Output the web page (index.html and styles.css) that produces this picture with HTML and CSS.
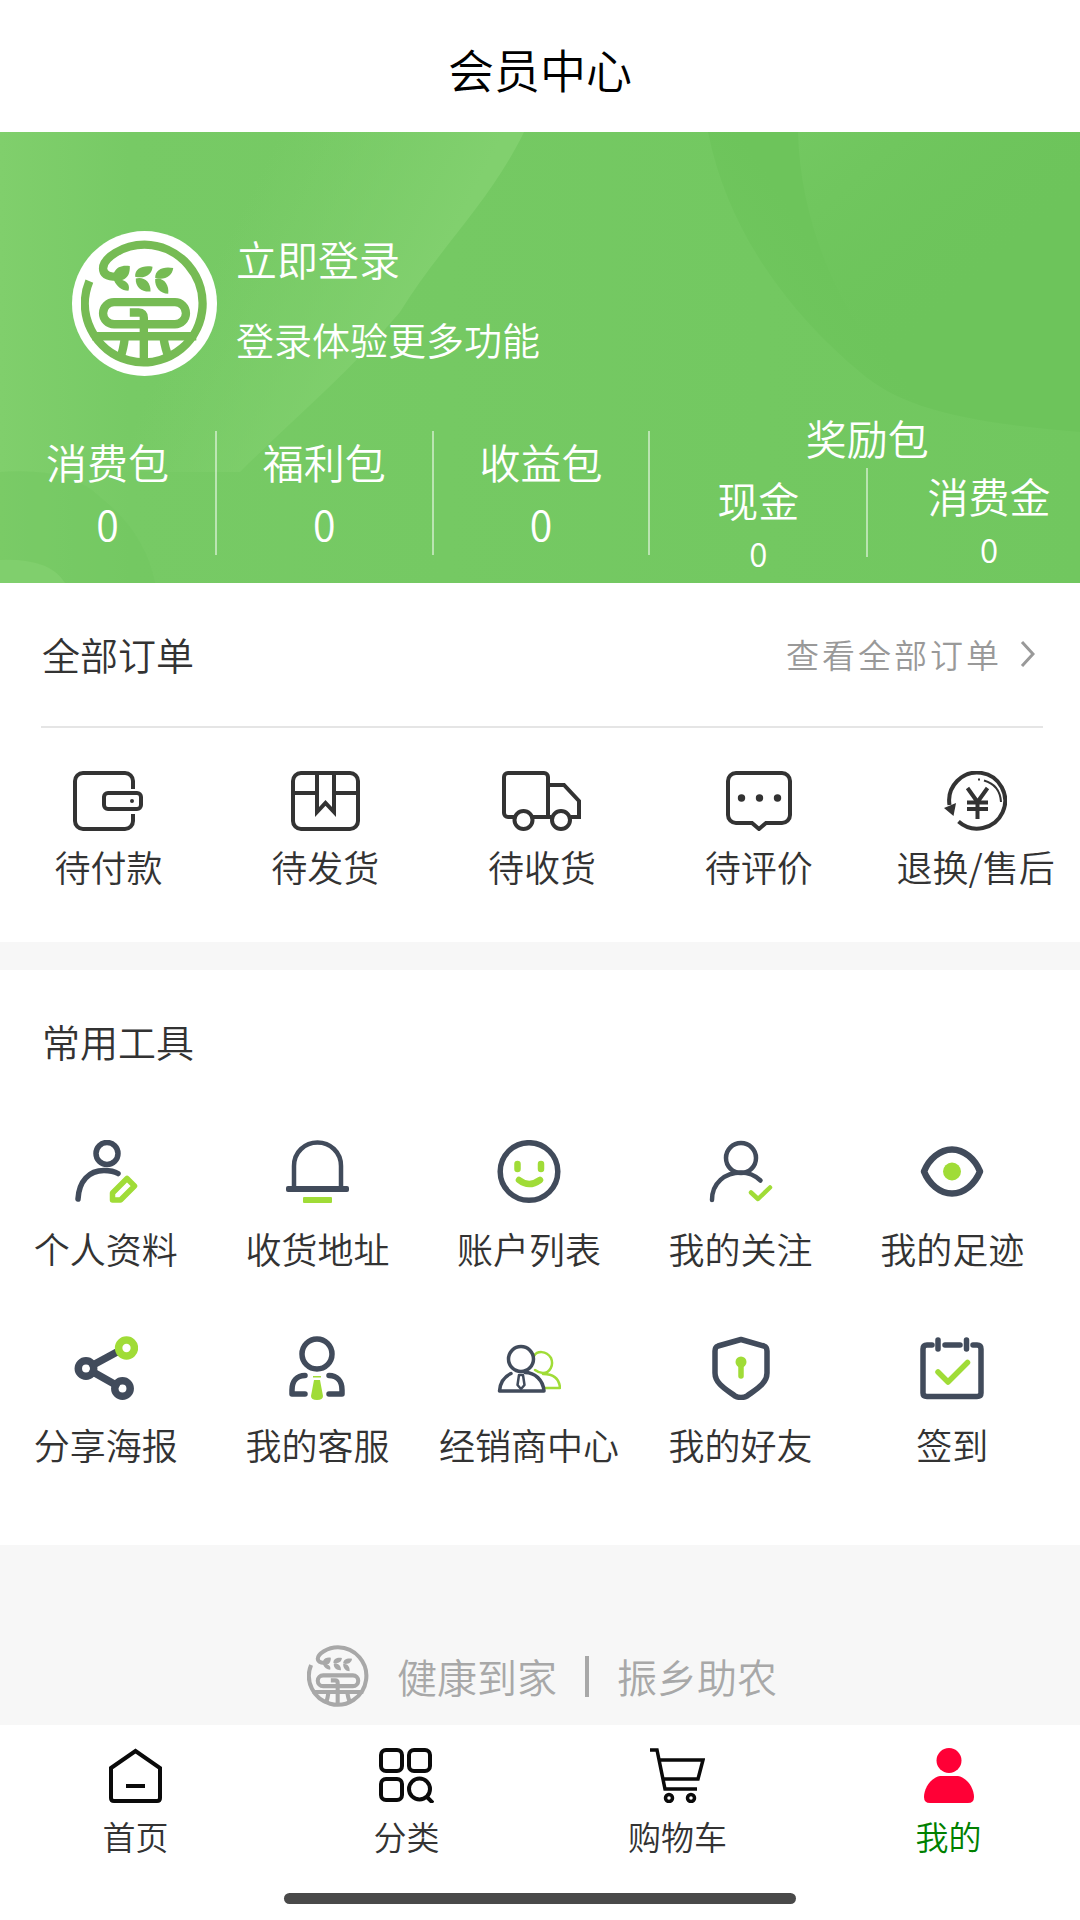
FILE: index.html
```html
<!DOCTYPE html>
<html lang="zh-CN">
<head>
<meta charset="utf-8">
<meta name="viewport" content="width=device-width, initial-scale=1">
<title>会员中心</title>
<link rel="stylesheet" href="styles.css">
</head>
<body>
<svg class="defs" width="0" height="0" aria-hidden="true">
  <symbol id="brand" viewBox="91 87 380 380">
    <g fill="none" stroke="currentColor" stroke-width="25">
      <path d="M116 210A176 176 0 1 0 281 101C215 101 157 142 157 172C157 190 172 197 200 197"/>
      <rect x="157" y="273" width="248" height="66" rx="33"/>
      <path d="M237 304H264Q279 304 279 320V455M125 375H436M222 380Q219 410 207 446M338 380Q342 410 356 446"/>
    </g>
    <g fill="currentColor">
      <path d="M190 184C198 166 218 161 237 165C238 185 232 202 214 207C232 212 238 226 233 239C212 238 198 226 190 208Z"/>
      <path d="M253 197C252 172 276 162 305 167C304 189 285 204 253 197ZM255 202C277 195 301 211 299 241C274 243 253 229 255 202Z"/>
      <path d="M313 201C312 176 337 165 367 171C364 195 343 208 313 201ZM313 204C337 197 356 219 352 248C328 248 311 229 313 204Z"/>
    </g>
  </symbol>
</svg>

<header class="topbar"><h1>会员中心</h1></header>

<main>
  <section class="hero">
    <svg class="hero-art" viewBox="0 0 1080 451" preserveAspectRatio="none" aria-hidden="true">
      <defs>
        <linearGradient id="edge" x1="0" x2="1" y1="0" y2="0"><stop offset="0" stop-color="#80cf6c"/><stop offset=".12" stop-color="#77ca65"/><stop offset="1" stop-color="#71c75f"/></linearGradient>
        <linearGradient id="beam" gradientUnits="userSpaceOnUse" x1="250" y1="60" x2="430" y2="150"><stop offset="0" stop-color="#81d06e" stop-opacity="0"/><stop offset="1" stop-color="#81d06e"/></linearGradient>
        <linearGradient id="sheen" gradientUnits="userSpaceOnUse" x1="800" y1="0" x2="960" y2="180"><stop offset="0" stop-color="#73c861"/><stop offset="1" stop-color="#6dc45b" stop-opacity="0"/></linearGradient>
        <linearGradient id="shade" gradientUnits="userSpaceOnUse" x1="700" y1="200" x2="820" y2="120"><stop offset="0" stop-color="#6dc45b" stop-opacity=".3"/><stop offset="1" stop-color="#6dc45b"/></linearGradient>
      </defs>
      <path fill="url(#edge)" d="M0 0H1080V451H0Z"/>
      <path fill="url(#beam)" d="M200 0H524C490 70 440 115 400 180C350 240 290 290 240 340H60Z"/>
      <path fill="url(#shade)" d="M708 0H1080V300C960 290 900 275 860 240C800 190 730 110 708 0Z"/>
      <path fill="url(#sheen)" d="M798 0H1080V260C1000 250 930 250 890 240C830 165 800 80 798 0Z"/>
      <path fill="#71c65f" d="M0 340Q70 335 100 365Q145 400 155 451H0Z" opacity=".4"/>
      <path fill="#80cf6d" d="M0 428Q50 426 65 451H0Z"/>
    </svg>
    <a class="profile" href="#">
      <span class="avatar"><svg width="127" height="127"><use href="#brand"/></svg></span>
      <span class="profile-text"><strong>立即登录</strong><span>登录体验更多功能</span></span>
    </a>
    <div class="stats">
      <a class="stat" href="#"><span>消费包</span><b>0</b></a>
      <a class="stat" href="#"><span>福利包</span><b>0</b></a>
      <a class="stat" href="#"><span>收益包</span><b>0</b></a>
      <div class="rewards">
        <h2>奖励包</h2>
        <div class="reward-row">
          <a class="reward cash" href="#"><span>现金</span><b>0</b></a>
          <i class="rule"></i>
          <a class="reward credit" href="#"><span>消费金</span><b>0</b></a>
        </div>
      </div>
    </div>
  </section>

  <section class="orders">
    <div class="orders-head">
      <h2>全部订单</h2>
      <a class="more" href="#">查看全部订单
        <svg width="15" height="26" viewBox="0 0 15 26"><path d="M2 1L13 13L2 25"/></svg>
      </a>
    </div>
    <nav class="order-grid" aria-label="订单">
      <a href="#"><svg width="70" height="60" viewBox="0 0 70 60"><path d="M60 18V10a8 8 0 0 0-8-8H10a8 8 0 0 0-8 8V50a8 8 0 0 0 8 8H52a8 8 0 0 0 8-8V43"/><rect x="31" y="22" width="37" height="16" rx="4"/><circle class="dot" cx="59" cy="30" r="2"/></svg><span>待付款</span></a>
      <a href="#"><svg width="69" height="60" viewBox="0 0 69 60"><rect x="2" y="2" width="65" height="56" rx="8"/><path d="M2 22H26M43 22H67M26 2V41L34.500 32L43 41V2"/></svg><span>待发货</span></a>
      <a href="#"><svg width="79" height="60" viewBox="0 0 79 60"><path d="M12 46H6a4 4 0 0 1-4-4V6a4 4 0 0 1 4-4H42a4 4 0 0 1 4 4V46M31 46H49M46 14H62L77 30V46H69"/><circle cx="21.500" cy="49" r="9"/><circle cx="59" cy="49" r="9"/></svg><span>待收货</span></a>
      <a href="#"><svg width="66" height="60" viewBox="0 0 66 60"><path d="M10 2H56a8 8 0 0 1 8 8V44a8 8 0 0 1-8 8H40L33 58L26 52H10a8 8 0 0 1-8-8V10a8 8 0 0 1 8-8Z"/><g class="dot"><circle cx="15.500" cy="27" r="3.700"/><circle cx="33.500" cy="27" r="3.700"/><circle cx="51.500" cy="27" r="3.700"/></g></svg><span>待评价</span></a>
      <a href="#"><svg width="63" height="60" viewBox="0 0 63 60"><path d="M5.500 34A28 28 0 1 1 14.500 50.500M23.500 17L33.500 31L43.500 17M33.500 31V48M23 31.500H44M23 38H44"/><path class="fine" d="M40 9.500Q56 14 57 31M34 8.500h2"/><path class="dot" d="M0 37L12 32L9.500 45Z"/></svg><span>退换/售后</span></a>
    </nav>
  </section>

  <section class="tools">
    <h2>常用工具</h2>
    <nav class="tool-grid" aria-label="常用工具">
      <a href="#"><svg viewBox="0 0 64 64"><circle cx="33" cy="13.500" r="11"/><path d="M4 59C5 41 15 30.500 30 30.500Q39 30.500 44 33.500"/><path class="lime" d="M38.500 53L53 38.500L60.500 46L46.500 60H38.500Z"/></svg><span>个人资料</span></a>
      <a href="#"><svg viewBox="0 0 64 64"><path class="mid" d="M9 48V26C9 12 20 2.500 32.500 2.500S56 12 56 26V48"/><path class="solid" d="M3 46H62q2 0 2 2v2q0 2-2 2H3q-2 0-2-2v-2q0-2 2-2Z"/><path class="solid-lime" d="M19 57H46q1 0 1 1v4q0 1-1 1H19q-1 0-1-1v-4q0-1 1-1Z"/></svg><span>收货地址</span></a>
      <a href="#"><svg viewBox="0 0 64 64"><circle cx="32" cy="31.500" r="28.800"/><path class="lime wide" d="M20.500 24V29M44 24V29M22 40Q32 48 43 40"/></svg><span>账户列表</span></a>
      <a href="#"><svg viewBox="0 0 64 64"><circle class="mid" cx="32" cy="18" r="15"/><path class="mid" d="M3 60C3 43 16 32.500 32 32.500Q43 32.500 51.500 40.500"/><path class="lime mid" d="M42 52.500L49 59L61 47.500"/></svg><span>我的关注</span></a>
      <a href="#"><svg viewBox="0 0 64 64"><path class="wide" d="M4 31.500C9 19 20 9.500 32 9.500S55 19 60 31.500C55 44 44 53.500 32 53.500S9 44 4 31.500Z"/><circle class="solid-lime" cx="32" cy="31.500" r="9"/></svg><span>我的足迹</span></a>
      <a href="#"><svg viewBox="0 0 64 64"><path class="ring" d="M19 29L43 16M19 36L42 49"/><circle class="ring" cx="12" cy="32.500" r="7.700"/><circle class="ring" cx="48.500" cy="52.500" r="7.700"/><circle class="ring lime" cx="52.500" cy="12" r="7.900"/></svg><span>分享海报</span></a>
      <a href="#"><svg viewBox="0 0 64 64"><circle cx="32" cy="18" r="15"/><path d="M20 39.500C12 39.500 7 45 7 54V58H20M44 39.500C52 39.500 57 45 57 54V58H44"/><path class="solid-lime" d="M29 44H35L38 60Q38 64 32 64T26 60ZM28 40H36V41.500H28Z"/></svg><span>我的客服</span></a>
      <a href="#"><svg viewBox="0 0 64 64"><g class="lime"><path class="thin" d="M37 20C40 15 49 14 54 22C57 29 53 37 46 37Q42 37 38 34M46 38Q62 38 63 52H48"/></g><g class="slim"><circle cx="24" cy="23" r="12.500"/><path d="M14 37.500C7 41 3 47 2.500 55H47C46 44 38 36.500 28 36.500"/><path class="thin" d="M22 39H26L27.500 49L24 53L20.500 49Z"/></g></svg><span>经销商中心</span></a>
      <a href="#"><svg viewBox="0 0 64 64"><path d="M32 3.500L9 10Q6 11 6 15V37C6 48 18 54 26 60Q32 63 38 60C46 54 58 48 58 37V15Q58 11 55 10Z"/><circle class="solid-lime" cx="32" cy="26" r="5.500"/><path class="lime" d="M32 28V40"/></svg><span>我的好友</span></a>
      <a href="#"><svg viewBox="0 0 64 64"><path d="M12 9H7Q3 9 3 13V57Q3 60.500 7 60.500H57Q61 60.500 61 57V13Q61 9 57 9H53M25 9H40M18 4V13M46.500 4V13"/><path class="lime" d="M18 36L28 46L47.500 26.500"/></svg><span>签到</span></a>
    </nav>
  </section>

  <footer class="brandline">
    <svg width="62" height="62" aria-hidden="true"><use href="#brand"/></svg>
    <span>健康到家</span><i class="rule"></i><span>振乡助农</span>
  </footer>
</main>

<div class="dock">
  <nav class="tabs" aria-label="主导航">
    <a href="#"><svg width="53" height="55" viewBox="0 0 53 55"><path d="M2 20L26.500 3L51 20V50Q51 53 48 53H5Q2 53 2 50ZM17 38H36"/></svg><span>首页</span></a>
    <a href="#"><svg width="55" height="55" viewBox="0 0 55 55"><rect x="2" y="2" width="21" height="21" rx="5"/><rect x="30" y="2" width="21" height="21" rx="5"/><rect x="2" y="31" width="21" height="21" rx="5"/><circle cx="40.500" cy="41" r="10.500"/><path d="M48 49L54 55"/></svg><span>分类</span></a>
    <a href="#"><svg width="55" height="55" viewBox="0 0 55 55"><path class="cart" d="M0 2H7L15 41H47M10 12H53L48 31H13"/><circle class="cart" cx="19" cy="50" r="3.500"/><circle class="cart" cx="41" cy="50" r="3.500"/></svg><span>购物车</span></a>
    <a class="active" href="#" aria-current="page"><svg width="50" height="55" viewBox="0 0 50 55"><circle cx="25" cy="12.500" r="12.500"/><path d="M16 28H34C44 30 50 41 50 49Q50 55 44 55H6Q0 55 0 49C0 41 6 30 16 28Z"/></svg><span>我的</span></a>
  </nav>
  <div class="home-indicator"></div>
</div>
</body>
</html>
```
FILE: styles.css
```css
* { box-sizing: border-box; }

body {
  margin: 0;
  min-height: 100vh;
  display: flex;
  flex-direction: column;
  overflow-x: clip;
  background: #f7f7f7;
  color: #333;
  font-family: "Noto Sans CJK SC", "Noto Sans", sans-serif;
  font-size: 36px;
  font-weight: 350;
  line-height: 50px;
}

h1, h2, b, strong { font-weight: inherit; }
h1, h2 { margin: 0; }
a { color: inherit; text-decoration: none; }
svg { display: block; flex: none; }
.defs { position: absolute; }

main { flex: 1; display: flex; flex-direction: column; }

.topbar {
  padding: 38px 0 34px;
  background: #fff;
  text-align: center;
}
.topbar h1 { font-size: 46px; line-height: 60px; color: #000; }

/* member banner */
.hero {
  position: relative;
  padding-top: 99px;
  background: #74c963;
  color: #fff;
  font-size: 41px;
}
.hero-art { position: absolute; inset: 0; width: 100%; height: 100%; }

.profile {
  position: relative;
  display: flex;
  gap: 19px;
  padding-left: 72px;
}
.avatar {
  width: 145px;
  height: 145px;
  border-radius: 50%;
  background: #fff;
  color: #76bb54;
  display: grid;
  place-items: center;
}
.profile-text { display: flex; flex-direction: column; gap: 27px; line-height: 54px; }
.profile-text span { font-size: 38px; }

/* these rows bleed slightly past the right edge */
.stats, .order-grid, .tabs { margin-right: -4px; }

.stats {
  position: relative;
  display: grid;
  grid-template-columns: repeat(5, minmax(0, 1fr));
  align-items: start;
  margin-top: 36px;
  text-align: center;
}
.stat {
  display: flex;
  flex-direction: column;
  gap: 2px;
  margin-top: 19px;
  padding-bottom: 2px;
  line-height: 60px;
  border-right: 2px solid rgba(255, 255, 255, .5);
}
.rewards { grid-column: span 2; padding-bottom: 5px; }
.rewards h2 { font-size: 41px; }
.reward-row {
  display: grid;
  grid-template-columns: 1fr 2px 1fr;
  align-items: start;
  margin-top: 6px;
}
.reward-row .rule { height: 89px; background: rgba(255, 255, 255, .5); }
.reward { display: flex; flex-direction: column; gap: 4px; }
.reward b { font-size: 33px; }
.cash { padding-top: 6px; }
.credit { padding: 2px 0 0 26px; }

/* orders */
.orders { background: #fff; padding: 41px 0 51px; }
.orders h2, .tools h2 { font-size: 38px; line-height: 60px; }
.orders-head {
  display: flex;
  justify-content: space-between;
  align-items: center;
  margin: 0 37px 0 41px;
  padding: 0 8px 42px 1px;
  border-bottom: 2px solid #e5e5e5;
}
.more {
  display: flex;
  align-items: center;
  gap: 18px;
  font-size: 33px;
  letter-spacing: 3px;
  color: #999;
}
.more svg { fill: none; stroke: #999; stroke-width: 3; }

.order-grid {
  display: grid;
  grid-template-columns: repeat(5, minmax(0, 1fr));
  margin-top: 43px;
}
.order-grid a { display: flex; flex-direction: column; align-items: center; gap: 10px; white-space: nowrap; }
.order-grid svg { fill: none; stroke: #333; stroke-width: 4; }
.order-grid .dot { fill: #333; stroke: none; }
.order-grid .fine { stroke-width: 2; }

/* tools */
.tools { margin-top: 28px; padding: 41px 22px 76px 0; background: #fff; }
.tools h2 { padding-left: 42px; }
.tool-grid {
  display: grid;
  grid-template-columns: repeat(5, minmax(0, 1fr));
  row-gap: 63px;
  margin-top: 69px;
}
.tool-grid a { display: flex; flex-direction: column; align-items: center; gap: 19px; white-space: nowrap; }
.tool-grid svg {
  width: 64px;
  height: 64px;
  fill: none;
  stroke: #414b5b;
  stroke-width: 5.5;
  stroke-linecap: round;
  stroke-linejoin: round;
}
.tool-grid .mid { stroke-width: 4.5; }
.tool-grid .slim { stroke-width: 3.5; }
.tool-grid .wide { stroke-width: 6.5; }
.tool-grid .ring { stroke-width: 7.5; }
.tool-grid .thin { stroke-width: 2.5; }
.tool-grid .lime { stroke: #a0dc37; }
.tool-grid .solid { fill: #414b5b; stroke: none; }
.tool-grid .solid-lime { fill: #a0dc37; stroke: none; }

/* slogan */
.brandline {
  flex: 1;
  display: flex;
  justify-content: center;
  align-items: center;
  padding: 100px 0 18px 4px;
  color: #a8a8a8;
  font-size: 40px;
}
.brandline svg { margin-right: 28px; }
.brandline .rule { width: 4px; height: 41px; margin: 0 28px; background: #a8a8a8; }

/* bottom tabs */
.dock { padding: 23px 0 16px; background: #fff; }
.tabs { display: grid; grid-template-columns: repeat(4, minmax(0, 1fr)); font-size: 33px; line-height: 40px; }
.tabs a { display: flex; flex-direction: column; align-items: center; gap: 13px; }
.tabs svg { fill: none; stroke: #0a0a0a; stroke-width: 4; }
.tabs .cart { stroke-width: 3.5; }
.tabs .active { color: #008000; }
.tabs .active svg { fill: #ff0036; stroke: none; }
.home-indicator {
  width: 47.4%;
  height: 11px;
  margin: 37px auto 0;
  border-radius: 6px;
  background: #494949;
}
```
